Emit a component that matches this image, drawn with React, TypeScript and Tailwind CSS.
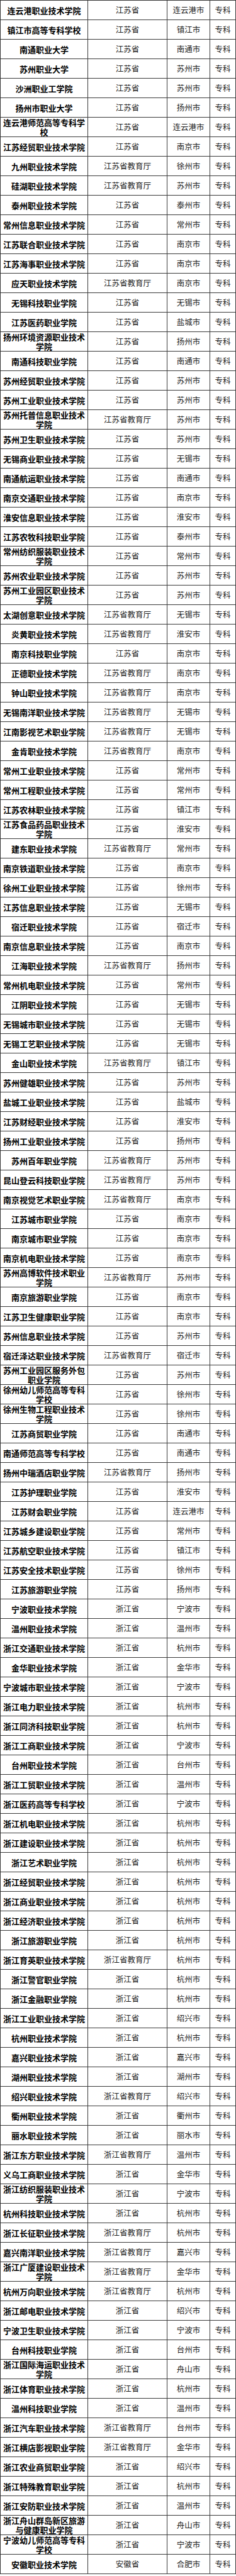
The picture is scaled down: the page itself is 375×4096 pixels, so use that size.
const raw = `连云港职业技术学院,江苏省,连云港市
镇江市高等专科学校,江苏省,镇江市
南通职业大学,江苏省,南通市
苏州职业大学,江苏省,苏州市
沙洲职业工学院,江苏省,苏州市
扬州市职业大学,江苏省,扬州市
连云港师范高等专科学校,江苏省,连云港市
江苏经贸职业技术学院,江苏省,南京市
九州职业技术学院,江苏省教育厅,徐州市
硅湖职业技术学院,江苏省教育厅,苏州市
泰州职业技术学院,江苏省,泰州市
常州信息职业技术学院,江苏省,常州市
江苏联合职业技术学院,江苏省,南京市
江苏海事职业技术学院,江苏省,南京市
应天职业技术学院,江苏省教育厅,南京市
无锡科技职业学院,江苏省,无锡市
江苏医药职业学院,江苏省,盐城市
扬州环境资源职业技术学院,江苏省,扬州市
南通科技职业学院,江苏省,南通市
苏州经贸职业技术学院,江苏省,苏州市
苏州工业职业技术学院,江苏省,苏州市
苏州托普信息职业技术学院,江苏省教育厅,苏州市
苏州卫生职业技术学院,江苏省,苏州市
无锡商业职业技术学院,江苏省,无锡市
南通航运职业技术学院,江苏省,南通市
南京交通职业技术学院,江苏省,南京市
淮安信息职业技术学院,江苏省,淮安市
江苏农牧科技职业学院,江苏省,泰州市
常州纺织服装职业技术学院,江苏省,常州市
苏州农业职业技术学院,江苏省,苏州市
苏州工业园区职业技术学院,江苏省,苏州市
太湖创意职业技术学院,江苏省教育厅,无锡市
炎黄职业技术学院,江苏省教育厅,淮安市
南京科技职业学院,江苏省,南京市
正德职业技术学院,江苏省教育厅,南京市
钟山职业技术学院,江苏省教育厅,南京市
无锡南洋职业技术学院,江苏省教育厅,无锡市
江南影视艺术职业学院,江苏省教育厅,无锡市
金肯职业技术学院,江苏省教育厅,南京市
常州工业职业技术学院,江苏省,常州市
常州工程职业技术学院,江苏省,常州市
江苏农林职业技术学院,江苏省,镇江市
江苏食品药品职业技术学院,江苏省,淮安市
建东职业技术学院,江苏省教育厅,常州市
南京铁道职业技术学院,江苏省,南京市
徐州工业职业技术学院,江苏省,徐州市
江苏信息职业技术学院,江苏省,无锡市
宿迁职业技术学院,江苏省,宿迁市
南京信息职业技术学院,江苏省,南京市
江海职业技术学院,江苏省教育厅,扬州市
常州机电职业技术学院,江苏省,常州市
江阴职业技术学院,江苏省,无锡市
无锡城市职业技术学院,江苏省,无锡市
无锡工艺职业技术学院,江苏省,无锡市
金山职业技术学院,江苏省教育厅,镇江市
苏州健雄职业技术学院,江苏省,苏州市
盐城工业职业技术学院,江苏省,盐城市
江苏财经职业技术学院,江苏省,淮安市
扬州工业职业技术学院,江苏省,扬州市
苏州百年职业学院,江苏省教育厅,苏州市
昆山登云科技职业学院,江苏省教育厅,苏州市
南京视觉艺术职业学院,江苏省教育厅,南京市
江苏城市职业学院,江苏省,南京市
南京城市职业学院,江苏省,南京市
南京机电职业技术学院,江苏省,南京市
苏州高博软件技术职业学院,江苏省教育厅,苏州市
南京旅游职业学院,江苏省,南京市
江苏卫生健康职业学院,江苏省,南京市
苏州信息职业技术学院,江苏省,苏州市
宿迁泽达职业技术学院,江苏省教育厅,宿迁市
苏州工业园区服务外包职业学院,江苏省,苏州市
徐州幼儿师范高等专科学校,江苏省,徐州市
徐州生物工程职业技术学院,江苏省,徐州市
江苏商贸职业学院,江苏省,南通市
南通师范高等专科学校,江苏省,南通市
扬州中瑞酒店职业学院,江苏省教育厅,扬州市
江苏护理职业学院,江苏省,淮安市
江苏财会职业学院,江苏省,连云港市
江苏城乡建设职业学院,江苏省,常州市
江苏航空职业技术学院,江苏省,镇江市
江苏安全技术职业学院,江苏省,徐州市
江苏旅游职业学院,江苏省,扬州市
宁波职业技术学院,浙江省,宁波市
温州职业技术学院,浙江省,温州市
浙江交通职业技术学院,浙江省,杭州市
金华职业技术学院,浙江省,金华市
宁波城市职业技术学院,浙江省,宁波市
浙江电力职业技术学院,浙江省,杭州市
浙江同济科技职业学院,浙江省,杭州市
浙江工商职业技术学院,浙江省,宁波市
台州职业技术学院,浙江省,台州市
浙江工贸职业技术学院,浙江省,温州市
浙江医药高等专科学校,浙江省,宁波市
浙江机电职业技术学院,浙江省,杭州市
浙江建设职业技术学院,浙江省,杭州市
浙江艺术职业学院,浙江省,杭州市
浙江经贸职业技术学院,浙江省,杭州市
浙江商业职业技术学院,浙江省,杭州市
浙江经济职业技术学院,浙江省,杭州市
浙江旅游职业学院,浙江省,杭州市
浙江育英职业技术学院,浙江省教育厅,杭州市
浙江警官职业学院,浙江省,杭州市
浙江金融职业学院,浙江省,杭州市
浙江工业职业技术学院,浙江省,绍兴市
杭州职业技术学院,浙江省,杭州市
嘉兴职业技术学院,浙江省,嘉兴市
湖州职业技术学院,浙江省,湖州市
绍兴职业技术学院,浙江省教育厅,绍兴市
衢州职业技术学院,浙江省,衢州市
丽水职业技术学院,浙江省,丽水市
浙江东方职业技术学院,浙江省教育厅,温州市
义乌工商职业技术学院,浙江省,金华市
浙江纺织服装职业技术学院,浙江省,宁波市
杭州科技职业技术学院,浙江省,杭州市
浙江长征职业技术学院,浙江省教育厅,杭州市
嘉兴南洋职业技术学院,浙江省教育厅,嘉兴市
浙江广厦建设职业技术学院,浙江省教育厅,金华市
杭州万向职业技术学院,浙江省教育厅,杭州市
浙江邮电职业技术学院,浙江省,绍兴市
宁波卫生职业技术学院,浙江省,宁波市
台州科技职业学院,浙江省,台州市
浙江国际海运职业技术学院,浙江省,舟山市
浙江体育职业技术学院,浙江省,杭州市
温州科技职业学院,浙江省,温州市
浙江汽车职业技术学院,浙江省教育厅,台州市
浙江横店影视职业学院,浙江省教育厅,金华市
浙江农业商贸职业学院,浙江省,绍兴市
浙江特殊教育职业学院,浙江省,杭州市
浙江安防职业技术学院,浙江省,温州市
浙江舟山群岛新区旅游与健康职业学院,浙江省,舟山市
宁波幼儿师范高等专科学校,浙江省,宁波市
安徽职业技术学院,安徽省,合肥市`

const rows = raw.split("\n").map((line) => {
    const [name, dept, city] = line.split(",")
    return { name, dept, city }
})

const font = { fontFamily: '"Noto Sans CJK SC", "Noto Sans", sans-serif' }

export default function App() {
    return (
        <div className="w-[375px] bg-white border-l border-t border-[#333]" style={font}>
            {rows.map((r, i) => (
                <div key={i} className="flex h-[31.01px] border-b border-[#3a3a3a]">
                    <div className="w-[139px] shrink-0 border-r border-[#3a3a3a] flex items-center justify-center text-center px-[2px] text-[13px] leading-[15px] font-bold text-black">
                        {r.name}
                    </div>
                    <div className="w-[126px] shrink-0 border-r border-[#3a3a3a] flex items-center justify-center text-[12.5px] text-[#222]">
                        {r.dept}
                    </div>
                    <div className="w-[68px] shrink-0 border-r border-[#3a3a3a] flex items-center justify-center text-[12.5px] text-[#222]">
                        {r.city}
                    </div>
                    <div className="w-[41px] shrink-0 border-r border-[#3a3a3a] flex items-center justify-center text-[12.5px] text-[#222]">
                        专科
                    </div>
                </div>
            ))}
        </div>
    )
}
